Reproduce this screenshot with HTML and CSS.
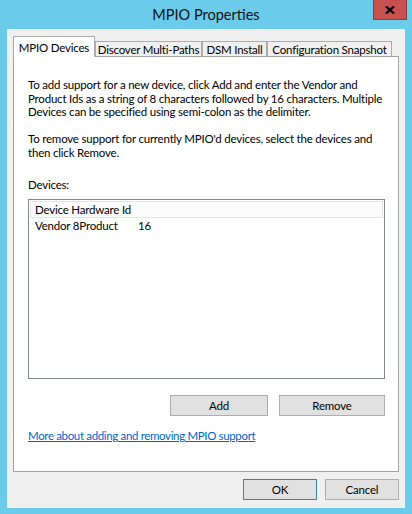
FILE: index.html
```html
<!DOCTYPE html>
<html>
<head>
<meta charset="utf-8">
<link rel="stylesheet" href="styles.css">
</head>
<body>
<div class="window">
  <div class="titlebar">
    <span class="title">MPIO Properties</span>
    <div class="close"><svg width="10" height="8" viewBox="0 0 10 8"><path d="M1 0.5 L9 7.5 M9 0.5 L1 7.5" stroke="#000" stroke-width="2.2"/></svg></div>
  </div>
  <div class="client">
    <div class="tabs">
      <div class="tab active t1">MPIO Devices</div>
      <div class="tab t2">Discover Multi-Paths</div>
      <div class="tab t3">DSM Install</div>
      <div class="tab t4">Configuration Snapshot</div>
    </div>
    <div class="panel">
      <p class="desc">To add support for a new device, click Add and enter the Vendor and<br>Product Ids as a string of 8 characters followed by 16 characters. Multiple<br>Devices can be specified using semi-colon as the delimiter.</p>
      <p class="desc gap">To remove support for currently MPIO'd devices, select the devices and<br>then click Remove.</p>
      <div class="label">Devices:</div>
      <div class="listbox">
        <div class="row head">Device Hardware Id</div>
        <div class="row"><span class="c1">Vendor 8Product</span><span>16</span></div>
      </div>
      <div class="actions">
        <button class="btn add">Add</button>
        <button class="btn remove">Remove</button>
      </div>
      <a class="link" href="#">More about adding and removing MPIO support</a>
    </div>
    <div class="footer">
      <button class="btn ok">OK</button>
      <button class="btn cancel">Cancel</button>
    </div>
  </div>
</div>
</body>
</html>
```
FILE: styles.css
```css
html, body {
  margin: 0;
  padding: 0;
}
body {
  width: 412px;
  height: 514px;
  overflow: hidden;
  background: #6bcbea;
  font-family: Lato, "Noto Sans", sans-serif;
  font-size: 11.5px;
  letter-spacing: -0.2px;
  color: #000;
}
.window {
  display: flex;
  flex-direction: column;
}
.titlebar {
  height: 29px;
  position: relative;
  display: flex;
  justify-content: center;
  align-items: center;
}
.title {
  font-size: 14.5px;
  letter-spacing: 0;
  color: #111;
}
.close {
  position: absolute;
  top: 0;
  right: 5px;
  width: 34px;
  height: 20px;
  box-sizing: border-box;
  background: #c75050;
  border: 1px solid #8d3d3d;
  border-top: none;
  display: flex;
  align-items: center;
  justify-content: center;
}
.client {
  margin: 0 7px;
  height: 479px;
  box-sizing: border-box;
  background: #f0f0f0;
  padding: 7px 6px 0 6px;
  display: flex;
  flex-direction: column;
}
.tabs {
  display: flex;
  align-items: flex-end;
  height: 20px;
}
.tab {
  box-sizing: border-box;
  height: 15px;
  border: 1px solid #acacac;
  border-bottom: none;
  background: #f0f0f0;
  display: flex;
  align-items: center;
  justify-content: center;
  white-space: nowrap;
  overflow: hidden;
}
.tab.active {
  height: 21px;
  background: #fff;
  margin-bottom: -1px;
  position: relative;
  z-index: 1;
}
.t1 { width: 82px; }
.t2 { width: 107px; }
.t3 { width: 65px; }
.t4 { width: 125px; }
.panel {
  height: 416px;
  box-sizing: border-box;
  border: 1px solid #a3a3a3;
  background: #fff;
  padding: 21px 13px 0 14px;
}
.desc {
  margin: 0;
  line-height: 13.6px;
  white-space: nowrap;
}
.desc.gap {
  margin-top: 13.6px;
}
.label {
  margin-top: 18.4px;
  line-height: 14px;
}
.listbox {
  margin-top: 7px;
  height: 180px;
  box-sizing: border-box;
  border: 1px solid #828790;
  padding: 1px;
}
.row {
  height: 16px;
  line-height: 16px;
  padding-left: 5px;
  display: flex;
}
.row.head {
  height: 17px;
  box-sizing: border-box;
  border: 1px solid #e3e3e3;
  background: #fcfcfc;
  padding-left: 4px;
  line-height: 15px;
}
.c1 {
  width: 103px;
}
.actions {
  margin-top: 16px;
  display: flex;
  justify-content: flex-end;
  gap: 11px;
}
.btn {
  height: 21px;
  box-sizing: border-box;
  background: #e1e1e1;
  border: 1px solid #adadad;
  font-family: inherit;
  font-size: inherit;
  letter-spacing: inherit;
  color: #000;
  padding: 0;
  margin: 0;
}
.add { width: 98px; }
.remove { width: 106px; }
.link {
  display: inline-block;
  margin-top: 13px;
  line-height: 14px;
  letter-spacing: -0.35px;
  color: #0066cc;
  text-decoration: underline;
}
.footer {
  margin-top: 7px;
  display: flex;
  justify-content: flex-end;
  gap: 8px;
}
.ok, .cancel { width: 74px; }
.ok { border-color: #3c7fb1; }
```
